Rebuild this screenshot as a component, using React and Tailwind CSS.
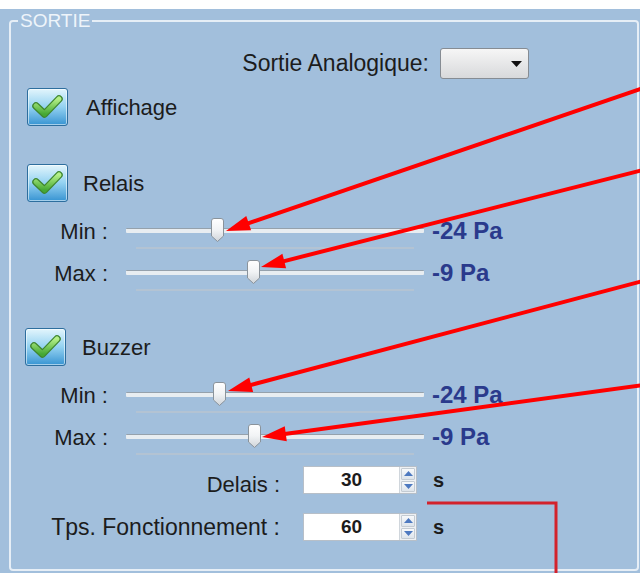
import React from "react";

const Thumb = ({ className }) => (
  <svg className={className} width="13" height="24" viewBox="0 0 13 24">
    <defs>
      <linearGradient id="thumbg" x1="0" y1="0" x2="0" y2="1">
        <stop offset="0" stopColor="#ffffff" />
        <stop offset="0.5" stopColor="#f1f3f5" />
        <stop offset="1" stopColor="#cfd4d9" />
      </linearGradient>
    </defs>
    <path
      d="M0.5 3 Q0.5 0.5 3 0.5 H10 Q12.5 0.5 12.5 3 V18 L6.5 23.5 L0.5 18 Z"
      fill="url(#thumbg)"
      stroke="#8a939b"
      strokeWidth="1"
    />
  </svg>
);

const CheckBox = () => (
  <div className="w-[41px] h-[38px] rounded-[3px] border border-[#2d6e9e] bg-linear-to-b from-[#e2f5fc] via-[#93d2f1] to-[#3594d2] shadow-[inset_0_0_0_1px_rgba(255,255,255,0.55)] flex items-center justify-center">
    <svg width="39" height="36" viewBox="0 0 39 36">
      <defs>
        <linearGradient id="chkg" x1="0" y1="0" x2="0" y2="1">
          <stop offset="0" stopColor="#b4f088" />
          <stop offset="1" stopColor="#45a834" />
        </linearGradient>
      </defs>
      <path d="M8 17 L16.5 25 L31 10" fill="none" stroke="#3f8630" strokeWidth="7.5" strokeLinecap="round" strokeLinejoin="round" />
      <path d="M8 17 L16.5 25 L31 10" fill="none" stroke="url(#chkg)" strokeWidth="5" strokeLinecap="round" strokeLinejoin="round" />
    </svg>
  </div>
);

const SliderRow = ({ label, value, thumbClass }) => (
  <div className="flex items-center h-[42px]">
    <div className="w-[97px] text-right text-[22px] text-[#1c1c1c]">{label}</div>
    <div className="relative ml-[18px] w-[298px] h-[42px]">
      <div className="mt-[18px] h-[5px] bg-[#e8edf1] border-t border-[#95a1ac] rounded-[1px]" />
      <div className="mt-[14px] mx-[10px] h-[2px] bg-[#b3c3d3]" />
      <Thumb className={thumbClass} />
    </div>
    <div className="ml-[8px] text-[24px] font-bold text-[#2a3a8c]">{value}</div>
  </div>
);

const Spin = ({ value }) => (
  <div className="flex w-[114px] h-[28px] border border-[#b7bfc8] bg-white">
    <div className="flex-1 flex items-center justify-center text-[19px] font-bold text-[#1c1c1c]">{value}</div>
    <div className="w-[17px] flex flex-col gap-[1px] p-[1px] border-l border-[#d0d6dc] bg-[#eef1f4]">
      <div className="flex-1 flex items-center justify-center rounded-[1px] border border-[#c3cbd3] bg-linear-to-b from-[#f7f9fb] to-[#dde4eb]">
        <svg width="9" height="5" viewBox="0 0 9 5"><path d="M0 5 L4.5 0 L9 5 Z" fill="#4d79c0" /></svg>
      </div>
      <div className="flex-1 flex items-center justify-center rounded-[1px] border border-[#c3cbd3] bg-linear-to-b from-[#f7f9fb] to-[#dde4eb]">
        <svg width="9" height="5" viewBox="0 0 9 5"><path d="M0 0 L4.5 5 L9 0 Z" fill="#4d79c0" /></svg>
      </div>
    </div>
  </div>
);

function arrow(x1, y1, x2, y2) {
  const dx = x2 - x1, dy = y2 - y1;
  const L = Math.hypot(dx, dy);
  const ux = dx / L, uy = dy / L;
  const hl = 24, hw = 7.5;
  const bx = x2 - ux * hl, by = y2 - uy * hl;
  const px = -uy, py = ux;
  return {
    line: [x1, y1, bx + ux * 3, by + uy * 3],
    head: `${x2},${y2} ${bx + px * hw},${by + py * hw} ${bx - px * hw},${by - py * hw}`,
  };
}

const ARROWS = [
  arrow(643, 88, 226, 231),
  arrow(643, 170, 261, 267),
  arrow(643, 281, 228, 391),
  arrow(643, 385, 262, 437),
];

export default function App() {
  return (
    <div className="relative w-[640px] h-[573px] bg-white overflow-hidden font-['Liberation_Sans',Arial,sans-serif]">
      <div className="mt-[9px] h-[564px] bg-[#a2bfdc] pt-[11px] pl-[9px]">
        <div className="relative w-[630px] h-[551px] border-2 border-[#e6eef6] rounded-[4px]">
          <span className="absolute top-[-12px] left-[7px] px-[2px] bg-[#a2bfdc] text-[19px] leading-[22px] text-[#eef4fa]">
            SORTIE
          </span>

          <div className="mt-[26px] h-[31px] flex items-center justify-end pr-[108px]">
            <span className="text-[23px] text-[#1c1c1c]">Sortie Analogique:</span>
            <div className="ml-[11px] w-[89px] h-[31px] rounded-[3px] border border-[#868c93] bg-linear-to-b from-[#f6f6f6] to-[#d8d9db] flex items-center justify-end pr-[6px]">
              <svg width="11" height="6" viewBox="0 0 11 6"><path d="M0 0 L11 0 L5.5 6 Z" fill="#111" /></svg>
            </div>
          </div>

          <div className="mt-[9px] ml-[16px] flex items-center">
            <CheckBox />
            <span className="ml-[18px] text-[22px] text-[#1c1c1c]">Affichage</span>
          </div>

          <div className="mt-[38px] ml-[16px] flex items-center">
            <CheckBox />
            <span className="ml-[15px] text-[22px] text-[#1c1c1c]">Relais</span>
          </div>

          <div className="mt-[8px]">
            <SliderRow label="Min :" value="-24 Pa" thumbClass="absolute top-[8px] left-[85px]" />
            <SliderRow label="Max :" value="-9 Pa" thumbClass="absolute top-[8px] left-[121px]" />
          </div>

          <div className="mt-[34px] ml-[14px] flex items-center">
            <CheckBox />
            <span className="ml-[16px] text-[22px] text-[#1c1c1c]">Buzzer</span>
          </div>

          <div className="mt-[8px]">
            <SliderRow label="Min :" value="-24 Pa" thumbClass="absolute top-[8px] left-[87px]" />
            <SliderRow label="Max :" value="-9 Pa" thumbClass="absolute top-[8px] left-[122px]" />
          </div>

          <div className="mt-[8px] h-[28px] flex items-center">
            <div className="w-[269px] text-right text-[22px] text-[#1c1c1c] mt-[8px]">Delais :</div>
            <div className="ml-[23px]"><Spin value="30" /></div>
            <span className="ml-[16px] text-[20px] font-bold text-[#1c1c1c]">s</span>
          </div>

          <div className="mt-[19px] h-[28px] flex items-center">
            <div className="w-[269px] text-right text-[23px] text-[#1c1c1c]">Tps. Fonctionnement :</div>
            <div className="ml-[23px]"><Spin value="60" /></div>
            <span className="ml-[16px] text-[20px] font-bold text-[#1c1c1c]">s</span>
          </div>
        </div>
      </div>

      <svg className="absolute inset-0 pointer-events-none" width="640" height="573" viewBox="0 0 640 573">
        {ARROWS.map((a, i) => (
          <g key={i}>
            <line x1={a.line[0]} y1={a.line[1]} x2={a.line[2]} y2={a.line[3]} stroke="#ff0000" strokeWidth="4" />
            <polygon points={a.head} fill="#ff0000" />
          </g>
        ))}
        <polyline points="427,503 556,503 556,576" fill="none" stroke="#d3222c" strokeWidth="3" />
      </svg>
    </div>
  );
}
